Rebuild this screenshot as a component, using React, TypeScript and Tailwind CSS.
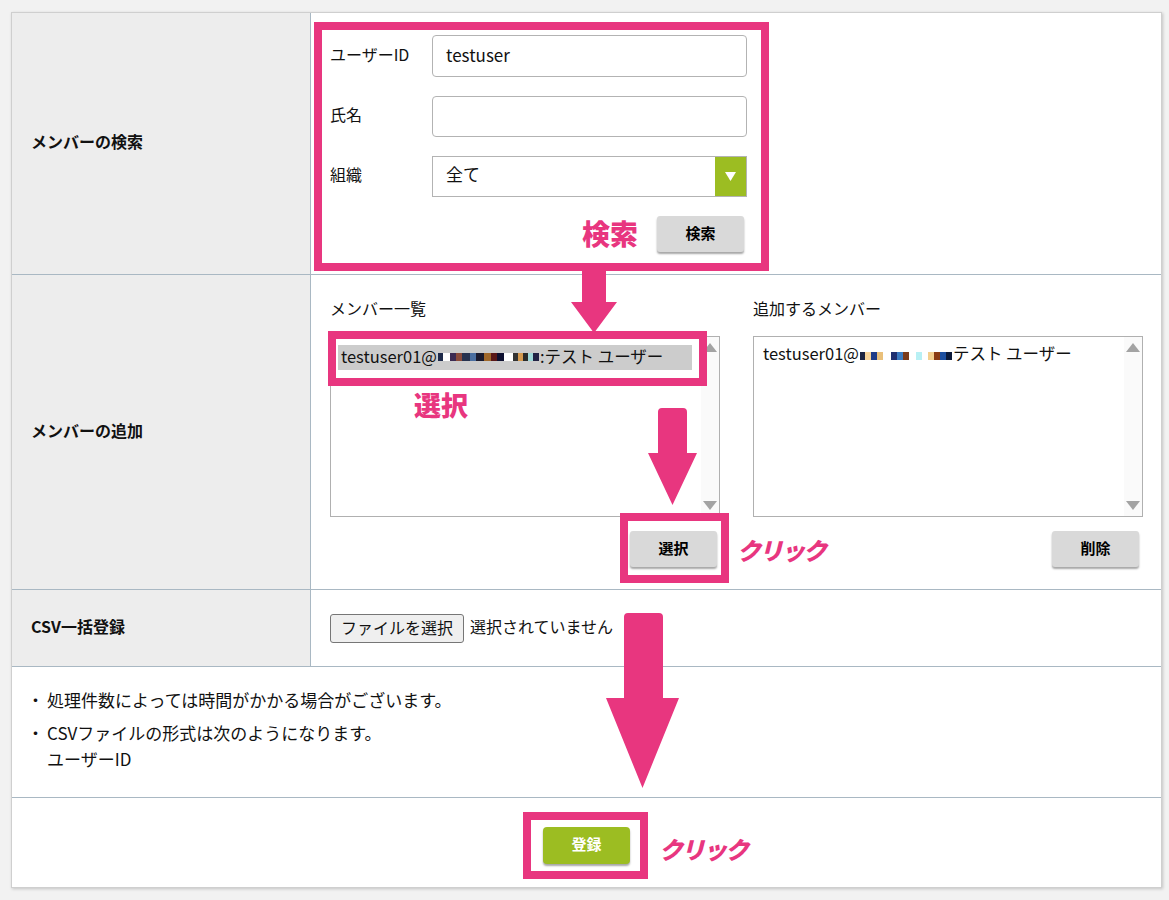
import React from 'react';

const mosaicA: [number, string][] = [
  [5, '#1e2a4a'], [7, '#ffffff'], [6, '#3c2a52'], [6, '#8a4a3a'], [8, '#27324f'], [6, '#4a6ea0'],
  [8, '#1a1a2e'], [7, '#a0682a'], [6, '#5a1818'], [7, '#0e1030'], [9, '#ffffff'],
  [5, '#333333'], [5, '#d49a50'], [5, '#2b2b2b'], [5, '#9fd8d8'], [6, '#222244'],
];

const mosaicB: [number, string][] = [
  [5, '#1d2440'], [6, '#f8d49a'], [6, '#1f3c88'], [6, '#eac07a'], [8, '#ffffff'], [6, '#203070'],
  [6, '#3a7ac0'], [6, '#7a3a1a'], [7, '#ffffff'], [6, '#b8f0f4'], [6, '#ffffff'], [6, '#f3cf8f'],
  [6, '#8a3a12'], [6, '#1d4fa0'], [6, '#0c1a3a'],
];

function Mosaic({ cells }: { cells: [number, string][] }) {
  return (
    <span className="inline-flex items-center h-[10px] mx-[1px]">
      {cells.map(([w, c], i) => (
        <span key={i} className="inline-block h-[8px]" style={{ width: w, backgroundColor: c }} />
      ))}
    </span>
  );
}

function ScrollTrack() {
  return (
    <div className="w-[18px] bg-[#fafafa] flex flex-col items-center justify-between py-[6px]">
      <svg width="14" height="9" viewBox="0 0 14 9">
        <polygon points="7,0 14,9 0,9" fill="#a3a3a3" />
      </svg>
      <svg width="14" height="9" viewBox="0 0 14 9">
        <polygon points="0,0 14,0 7,9" fill="#a3a3a3" />
      </svg>
    </div>
  );
}

function GrayButton({ label }: { label: string }) {
  return (
    <button className="w-[87px] h-[36px] bg-[#d9d9d9] rounded-[3px] text-[15px] font-bold text-black pb-[2px] shadow-[0_2px_2px_rgba(0,0,0,0.35)]">
      {label}
    </button>
  );
}

function PinkLabel({ text, className }: { text: string; className: string }) {
  return (
    <div className={`absolute font-black text-[#e8367f] leading-none ${className}`}>{text}</div>
  );
}

export default function App() {
  return (
    <div className="relative min-h-[900px] bg-[#f2f2f2] pt-3 pl-[11px] text-[16px] text-[#111] font-['Noto_Sans_CJK_JP',sans-serif]">
      <div className="w-[1151px] border border-[#cfcfcf] bg-white shadow-[1px_1px_3px_rgba(0,0,0,0.2)]">
        {/* メンバーの検索 */}
        <div className="grid grid-cols-[299px_1fr] h-[262px] border-b border-[#a9b8c3]">
          <div className="bg-[#ededed] border-r border-[#a9b8c3] flex items-center pl-[19px] pb-[5px] font-bold">
            メンバーの検索
          </div>
          <div className="pl-[19px] pt-[22px]">
            <div className="w-[417px]">
              <div className="flex items-center h-[42px]">
                <span className="w-[102px] pb-[5px]">ユーザーID</span>
                <div className="w-[315px] h-[42px] border border-[#b3b3b3] rounded-[4px] flex items-center px-[13px] pb-[3px] text-[17px]">
                  testuser
                </div>
              </div>
              <div className="flex items-center h-[41px] mt-[19px]">
                <span className="w-[102px] pb-[5px]">氏名</span>
                <div className="w-[315px] h-[41px] border border-[#b3b3b3] rounded-[4px]" />
              </div>
              <div className="flex items-center h-[41px] mt-[19px]">
                <span className="w-[102px] pb-[5px]">組織</span>
                <div className="w-[315px] h-[41px] border border-[#b3b3b3] flex">
                  <div className="flex-1 flex items-center px-[13px] pb-[5px] text-[17px]">全て</div>
                  <div className="w-[31px] bg-[#9cbd22] flex items-center justify-center">
                    <svg width="11" height="9" viewBox="0 0 11 9">
                      <polygon points="0,0 11,0 5.5,9" fill="#ffffff" />
                    </svg>
                  </div>
                </div>
              </div>
              <div className="flex justify-end mt-[19px] pr-[3px]">
                <GrayButton label="検索" />
              </div>
            </div>
          </div>
        </div>

        {/* メンバーの追加 */}
        <div className="grid grid-cols-[299px_1fr] h-[315px] border-b border-[#a9b8c3]">
          <div className="bg-[#ededed] border-r border-[#a9b8c3] flex items-center pl-[19px] pb-[5px] font-bold">
            メンバーの追加
          </div>
          <div className="pl-[19px] pt-[22px] grid grid-cols-[390px_390px] gap-[33px] content-start">
            <div>
              <div className="leading-[22px]">メンバー一覧</div>
              <div className="mt-[17px] h-[181px] border border-[#b0b0b0] flex">
                <div className="flex-1 pl-[7px] pt-[8px]">
                  <div className="w-[354px] h-[25px] bg-[#cccccc] flex items-center pl-[3px] pb-[2px] whitespace-nowrap text-[16.5px]">
                    testuser01@<Mosaic cells={mosaicA} />:テスト ユーザー
                  </div>
                </div>
                <ScrollTrack />
              </div>
              <div className="flex justify-end mt-[14px] pr-[3px]">
                <GrayButton label="選択" />
              </div>
            </div>
            <div>
              <div className="leading-[22px]">追加するメンバー</div>
              <div className="mt-[17px] h-[181px] border border-[#b0b0b0] flex">
                <div className="flex-1 pl-[9px] pt-[5px] leading-[22px] whitespace-nowrap text-[16.5px]">
                  testuser01@<Mosaic cells={mosaicB} />テスト ユーザー
                </div>
                <ScrollTrack />
              </div>
              <div className="flex justify-end mt-[14px] pr-[4px]">
                <GrayButton label="削除" />
              </div>
            </div>
          </div>
        </div>

        {/* CSV一括登録 */}
        <div className="grid grid-cols-[299px_1fr] h-[77px] border-b border-[#a9b8c3]">
          <div className="bg-[#ededed] border-r border-[#a9b8c3] flex items-center pl-[19px] pb-[5px] font-bold">
            CSV一括登録
          </div>
          <div className="flex items-center pl-[19px]">
            <button className="h-[29px] px-[10px] border border-[#767676] bg-[#efefef] rounded-[3px] text-[16px] leading-none pb-[2px]">
              ファイルを選択
            </button>
            <span className="ml-[6px] pb-[4px]">選択されていません</span>
          </div>
        </div>

        {/* 注意事項 */}
        <div className="h-[131px] border-b border-[#a9b8c3] pl-[15px] pt-[20px] leading-[26px] text-[17px]">
          <div className="flex">
            <span className="w-[20px]">・</span>
            <span>処理件数によっては時間がかかる場合がございます。</span>
          </div>
          <div className="flex mt-[7px]">
            <span className="w-[20px]">・</span>
            <span>
              CSVファイルの形式は次のようになります。
              <br />
              ユーザーID
            </span>
          </div>
        </div>

        {/* 登録 */}
        <div className="h-[89px] flex items-center justify-center pt-[5px]">
          <button className="w-[87px] h-[37px] bg-[#9cbd22] rounded-[4px] text-white font-bold text-[15px] pb-[2px] shadow-[0_2px_2px_rgba(0,0,0,0.35)]">
            登録
          </button>
        </div>
      </div>

      {/* annotations */}
      <div className="absolute left-[314px] top-[22px] w-[455px] h-[249px] border-[8px] border-[#e8367f]" />
      <PinkLabel text="検索" className="left-[582px] top-[219px] text-[28px]" />
      <svg className="absolute left-[571px] top-[266px]" width="46" height="67" viewBox="0 0 46 67">
        <polygon points="11,0 35,0 35,36 46,36 23,67 0,36 11,36" fill="#e8367f" />
      </svg>

      <div className="absolute left-[328px] top-[331px] w-[379px] h-[55px] border-[8px] border-[#e8367f]" />
      <PinkLabel text="選択" className="left-[414px] top-[391px] text-[27px]" />
      <svg className="absolute left-[648px] top-[408px]" width="49" height="97" viewBox="0 0 49 97">
        <path d="M10 4 Q10 0 14 0 L35 0 Q39 0 39 4 L39 45 L49 45 L24.5 97 L0 45 L10 45 Z" fill="#e8367f" />
      </svg>

      <div className="absolute left-[620px] top-[513px] w-[109px] h-[70px] border-[8px] border-[#e8367f]" />
      <PinkLabel text="クリック" className="left-[737px] top-[538px] text-[24px] italic tracking-[-2px]" />

      <svg className="absolute left-[606px] top-[613px]" width="73" height="175" viewBox="0 0 73 175">
        <path d="M18 4 Q18 0 22 0 L53 0 Q57 0 57 4 L57 85 L73 85 L36.5 175 L0 85 L18 85 Z" fill="#e8367f" />
      </svg>

      <div className="absolute left-[523px] top-[812px] w-[125px] h-[67px] border-[8px] border-[#e8367f]" />
      <PinkLabel text="クリック" className="left-[659px] top-[837px] text-[24px] italic tracking-[-2px]" />
    </div>
  );
}
